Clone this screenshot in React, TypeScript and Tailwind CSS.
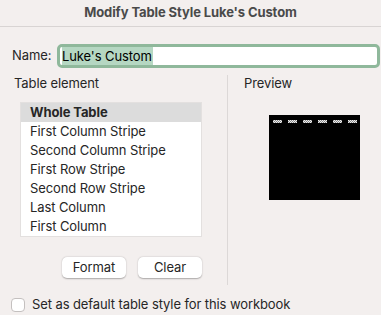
import React from "react"

const elements = [
  "Whole Table",
  "First Column Stripe",
  "Second Column Stripe",
  "First Row Stripe",
  "Second Row Stripe",
  "Last Column",
  "First Column",
]

const PreviewTable = () => (
  <svg width="91" height="85" viewBox="0 0 91 85">
    <defs>
      <pattern id="chk" width="2" height="2" patternUnits="userSpaceOnUse">
        <rect width="2" height="2" fill="#8a8a8a" />
        <rect width="1" height="1" fill="#f0f0f0" />
        <rect x="1" y="1" width="1" height="1" fill="#f0f0f0" />
      </pattern>
    </defs>
    <rect width="91" height="85" fill="#000" />
    {[0, 1, 2, 3, 4, 5].map((i) => (
      <rect key={i} x={4 + i * 15} y={5} width={9} height={3} fill="url(#chk)" />
    ))}
  </svg>
)

export default function App() {
  return (
    <div
      className="w-[381px] h-[315px] bg-[#f3efee] text-[13px] tracking-[-0.1px] text-[#262626] overflow-hidden"
      style={{ fontFamily: "Inter, 'Noto Sans', sans-serif" }}
    >
      {/* Title bar */}
      <div className="h-[27px] flex items-center justify-center border-b border-[#d8d4d3] font-bold text-[#4a4a4a]">
        Modify Table Style Luke's Custom
      </div>

      {/* Name row */}
      <div className="flex items-center mt-[17px] pl-[12px]">
        <span className="w-[45px]">Name:</span>
        <div className="w-[323px] h-[24px] border-[3px] border-[#8fb89b] rounded-[5px] bg-white flex items-stretch pl-[2px]">
          <span className="bg-[#b5d7c2] flex items-center text-[13px] text-black leading-none pr-px">Luke's Custom</span>
        </div>
      </div>

      {/* Main area */}
      <div className="flex mt-[6px]">
        {/* Left */}
        <div className="w-[227px] pt-[1px]">
          <div className="pl-[14px] leading-[16px]">Table element</div>
          <div className="ml-[20px] mt-[11px] w-[182px] border border-[#e3e0df] bg-white">
            {elements.map((el, i) => (
              <div
                key={el}
                className={`h-[19px] flex items-center pl-[9px] ${i === 0 ? "bg-[#dcdcdc] font-bold" : ""}`}
              >
                {el}
              </div>
            ))}
          </div>
          <div className="ml-[20px] w-[182px] flex justify-end gap-[12px] mt-[20px]">
            <button className="w-[64px] h-[21px] bg-white rounded-[5px] shadow-[0_0.5px_1.5px_rgba(0,0,0,0.3)] text-[#262626]">
              Format
            </button>
            <button className="w-[64px] h-[21px] bg-white rounded-[5px] shadow-[0_0.5px_1.5px_rgba(0,0,0,0.3)] text-[#262626]">
              Clear
            </button>
          </div>
        </div>

        {/* Divider */}
        <div className="w-px h-[210px] bg-[#dcd8d7] mt-[1px]" />

        {/* Right */}
        <div className="pt-[1px] pl-[16px]">
          <div className="leading-[16px]">Preview</div>
          <div className="mt-[24px] ml-[25px]">
            <PreviewTable />
          </div>
        </div>
      </div>

      {/* Checkbox */}
      <div className="flex items-center mt-[10px] pl-[11px] gap-[7px]">
        <div className="w-[14px] h-[14px] rounded-[4px] border border-[#c4c0bf] bg-white" />
        <span>Set as default table style for this workbook</span>
      </div>
    </div>
  )
}
